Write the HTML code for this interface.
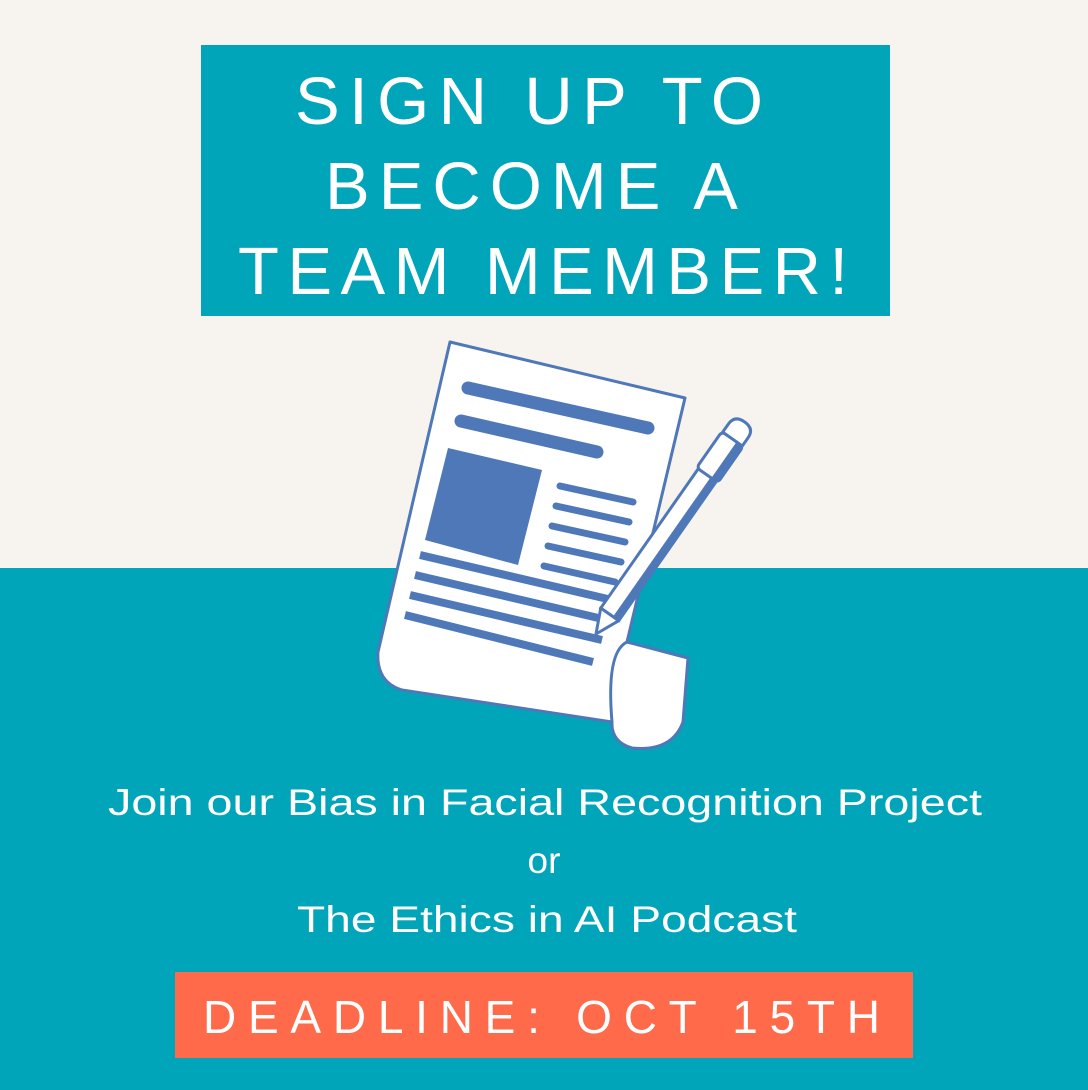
<!DOCTYPE html>
<html><head><meta charset="utf-8"><style>
html,body{margin:0;padding:0;width:1088px;height:1090px;overflow:hidden;background:#F7F3EE}
svg{display:block}
text{font-family:"Liberation Sans",sans-serif;fill:#fff}
</style></head><body>
<svg width="1088" height="1090" viewBox="0 0 1088 1090">
<rect x="0" y="0" width="1088" height="568" fill="#F7F3EE"/>
<rect x="0" y="568" width="1088" height="522" fill="#00A5BA"/>
<rect x="201" y="45" width="689" height="271" fill="#00A5BA"/>
<text x="295" y="124" font-size="67" textLength="468" lengthAdjust="spacing">SIGN UP TO</text>
<text x="325" y="209" font-size="67" textLength="413" lengthAdjust="spacing">BECOME A</text>
<text x="238" y="294" font-size="67" textLength="610" lengthAdjust="spacing">TEAM MEMBER!</text>

<!-- paper -->
<path d="M450,342 L685,398 L627,642 L688,658 L683,722 Q672,752 632,748 Q611,742 612,722 L402,690 Q376,682 378,652 Z" fill="#fff" stroke="#4F78B8" stroke-width="3" stroke-linejoin="round"/>
<path d="M627,642 Q606,652 612,722" fill="none" stroke="#4F78B8" stroke-width="3"/>
<g stroke="#4F78B8" stroke-linecap="round" fill="none">
<line x1="468" y1="388" x2="648" y2="428" stroke-width="13"/>
<line x1="461" y1="421" x2="597" y2="452" stroke-width="13"/>
<g stroke-width="7">
<line x1="560" y1="486" x2="633" y2="502"/>
<line x1="556" y1="506" x2="629" y2="522"/>
<line x1="552" y1="526" x2="625" y2="542"/>
<line x1="548" y1="546" x2="621" y2="562"/>
<line x1="544" y1="566" x2="615" y2="582"/>
</g>
<g stroke-width="8" stroke-linecap="butt">
<line x1="420" y1="555" x2="612" y2="600"/>
<line x1="415" y1="575" x2="607" y2="620"/>
<line x1="410" y1="595" x2="602" y2="640"/>
<line x1="405" y1="615" x2="593" y2="662"/>
</g>
</g>
<polygon points="448,448 542,470 518,565 425,540" fill="#4F78B8"/>
<!-- pen -->
<g transform="translate(596,634) rotate(-55)">
<path d="M0,0 L24,-11 L24,11 Z" fill="#fff" stroke="#4F78B8" stroke-width="3" stroke-linejoin="round"/>
<rect x="24" y="-11" width="170" height="22" fill="#fff" stroke="#4F78B8" stroke-width="3"/>
<rect x="24" y="4" width="170" height="7" fill="#4F78B8"/>
<rect x="194" y="-13" width="44" height="26" rx="4" fill="#fff" stroke="#4F78B8" stroke-width="3"/>
<rect x="194" y="5" width="44" height="8" fill="#4F78B8"/>
<path d="M238,-12 L248,-12 Q259,-12 259,0 Q259,12 248,12 L238,12 Z" fill="#fff" stroke="#4F78B8" stroke-width="3"/>
</g>

<text x="108" y="815" font-size="37" textLength="874" lengthAdjust="spacingAndGlyphs">Join our Bias in Facial Recognition Project</text>
<text x="544" y="873" font-size="37" text-anchor="middle">or</text>
<text x="297" y="932" font-size="37" textLength="500" lengthAdjust="spacingAndGlyphs">The Ethics in AI Podcast</text>

<rect x="175" y="972" width="738" height="86" fill="#FF6A4A"/>
<text x="203" y="1033" font-size="46" textLength="677" lengthAdjust="spacing">DEADLINE: OCT 15TH</text>
</svg>
</body></html>
